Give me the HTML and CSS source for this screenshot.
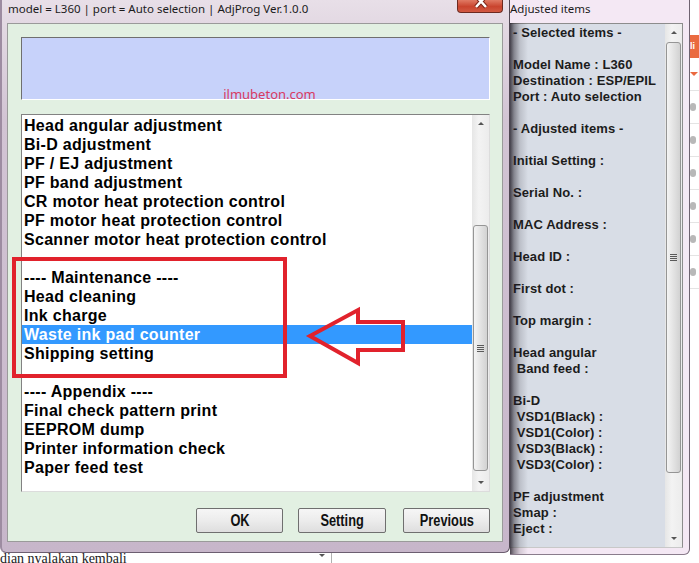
FILE: index.html
```html
<!DOCTYPE html>
<html>
<head>
	<meta charset="utf-8">
	<link rel="stylesheet" href="styles.css">
</head>
<body>
<div class="screen">
	<div class="left-col">
		<div class="win main">
			<div class="titlebar">
				<span class="title">model = L360 | port = Auto selection | AdjProg Ver.1.0.0</span>
				<span class="close">
					<svg width="46" height="13" viewBox="0 0 46 13">
						<path d="M19 -4 L29 7 M29 -4 L19 7" stroke="#7a2418" stroke-width="4.5" fill="none"/>
						<path d="M19 -4 L29 7 M29 -4 L19 7" stroke="#ffffff" stroke-width="2.5" fill="none"/>
					</svg>
				</span>
			</div>
			<div class="client">
				<div class="banner"><span class="mark">ilmubeton.com</span></div>
				<div class="listbox">
					<ul class="items">
						<li>Head angular adjustment</li>
						<li>Bi-D adjustment</li>
						<li>PF / EJ adjustment</li>
						<li>PF band adjustment</li>
						<li>CR motor heat protection control</li>
						<li>PF motor heat protection control</li>
						<li>Scanner motor heat protection control</li>
						<li>&nbsp;</li>
						<li>---- Maintenance ----</li>
						<li>Head cleaning</li>
						<li>Ink charge</li>
						<li class="selected">Waste ink pad counter</li>
						<li>Shipping setting</li>
						<li>&nbsp;</li>
						<li>---- Appendix ----</li>
						<li>Final check pattern print</li>
						<li>EEPROM dump</li>
						<li>Printer information check</li>
						<li>Paper feed test</li>
					</ul>
					<div class="scroll">
						<div class="sb-btn"><span class="up"></span></div>
						<div class="sb-gap"></div>
						<div class="thumb"><span class="grip"></span></div>
						<div class="sb-rest"></div>
						<div class="sb-btn"><span class="down"></span></div>
					</div>
				</div>
				<div class="buttons">
					<button class="btn"><span class="label">OK</span></button>
					<button class="btn wide"><span class="label">Setting</span></button>
					<button class="btn"><span class="label">Previous</span></button>
				</div>

				<!-- annotation drawn over the dialog -->
				<div class="callout"></div>
				<svg class="arrow" width="110" height="64" viewBox="0 0 110 64">
					<polygon points="7,31 55,5 55,17 100,17 100,45 55,45 55,58" fill="none" stroke="#e1222c" stroke-width="4" stroke-linejoin="miter"/>
				</svg>
			</div>
		</div>
		<div class="below">
			<span class="below-text">dian nyalakan kembali</span>
			<span class="below-arrow"></span>
			<span class="below-line"></span>
		</div>
	</div>

	<div class="win side">
		<div class="side-title">Adjusted items</div>
		<div class="side-list">
			<div class="report">- Selected items -

Model Name : L360
Destination : ESP/EPIL
Port : Auto selection

- Adjusted items -

Initial Setting :

Serial No. :

MAC Address :

Head ID :

First dot :

Top margin :

Head angular
 Band feed :

Bi-D
 VSD1(Black) :
 VSD1(Color) :
 VSD3(Black) :
 VSD3(Color) :

PF adjustment
Smap :
Eject :</div>
			<div class="scroll">
				<div class="sb-btn"><span class="up"></span></div>
				<div class="thumb long"><span class="grip"></span></div>
				<div class="sb-rest"></div>
				<div class="sb-btn"><span class="down"></span></div>
			</div>
		</div>
	</div>

	<div class="edge">
		<div class="edge-tab">li</div>
		<div class="edge-row"><span class="edge-caret"></span></div>
		<div class="edge-row"><span class="edge-dot"></span></div>
		<div class="edge-row"><span class="edge-dot"></span></div>
		<div class="edge-row"><span class="edge-dot"></span></div>
		<div class="edge-row"><span class="edge-dot"></span></div>
		<div class="edge-row"><span class="edge-dot"></span></div>
		<div class="edge-row"><span class="edge-dot"></span></div>
	</div>
</div>
</body>
</html>
```

FILE: styles.css
```css
html, body {
	margin: 0;
	padding: 0;
	background: #ffffff;
}

.screen {
	width: 699px;
	height: 563px;
	overflow: hidden;
	display: flex;
	flex-direction: row;
	font-family: "Liberation Sans", Arial, sans-serif;
}

/* ---------- main dialog ---------- */

.left-col {
	width: 510px;
	display: flex;
	flex-direction: column;
}

.main {
	height: 553px;
	box-sizing: border-box;
	display: flex;
	flex-direction: column;
	background: linear-gradient(to bottom, #e8dfe8 0, #e3d9e3 23px, #d2c4d4 120px, #c7b6ca 100%);
	border-left: 2px solid #9d8ca1;
	border-right: 1px solid #4f4652;
	border-bottom: 1px solid #6c5e70;
	border-radius: 0 0 6px 6px;
}

.titlebar {
	height: 23px;
	display: flex;
	align-items: flex-start;
	padding-left: 6px;
}

.title {
	font-family: "Noto Sans", "Open Sans", sans-serif;
	font-size: 11.5px;
	line-height: 18px;
	color: #1b1b1b;
	white-space: nowrap;
}

.close {
	margin-left: auto;
	margin-right: 6px;
	width: 46px;
	height: 13px;
	box-sizing: border-box;
	border: 1px solid #6d2a20;
	border-top: 0;
	border-radius: 0 0 4px 4px;
	background: linear-gradient(to bottom, #e07a64 0, #c9442e 55%, #d25a43 100%);
	overflow: hidden;
}

.close svg {
	display: block;
	margin-left: -1px;
}

.client {
	position: relative;
	height: 519px;
	box-sizing: border-box;
	margin: 0 6px 0 5px;
	border: 1px solid #9a9a9a;
	background: #e2f0e2;
	padding: 13px 12px 8px 13px;
	display: flex;
	flex-direction: column;
}

.banner {
	height: 63px;
	box-sizing: border-box;
	background: #c7d2fa;
	border: 1px solid #ffffff;
	border-top-color: #6f6f6f;
	border-left-color: #6f6f6f;
	display: flex;
	align-items: flex-end;
	justify-content: center;
	padding-left: 28px;
}

.mark {
	font-family: "Noto Sans", "Open Sans", sans-serif;
	font-size: 13px;
	line-height: 14px;
	color: #d73a62;
	margin-bottom: -2px;
}

.listbox {
	margin-top: 14px;
	height: 378px;
	box-sizing: border-box;
	display: flex;
	background: #ffffff;
	border: 1px solid #dcdcdc;
	border-top-color: #828282;
	border-left-color: #828282;
}

.items {
	flex: 1;
	list-style: none;
	margin: 0;
	padding: 1px 0 0 0;
	font-weight: bold;
	font-size: 16px;
	letter-spacing: 0.3px;
	line-height: 19px;
	color: #000000;
}

.items li {
	padding-left: 2px;
	white-space: nowrap;
}

.items li.selected {
	background: #3399ff;
	color: #ffffff;
}

/* ---------- scrollbars ---------- */

.scroll {
	width: 17px;
	display: flex;
	flex-direction: column;
	background: linear-gradient(to right, #e6e6e6, #f3f3f3 40%, #ececec);
}

.sb-btn {
	height: 17px;
	display: flex;
	align-items: center;
	justify-content: center;
}

.up {
	width: 0;
	height: 0;
	border-left: 3px solid transparent;
	border-right: 3px solid transparent;
	border-bottom: 3px solid #555555;
}

.down {
	width: 0;
	height: 0;
	border-left: 3px solid transparent;
	border-right: 3px solid transparent;
	border-top: 3px solid #555555;
}

.sb-gap {
	height: 93px;
}

.thumb {
	height: 246px;
	box-sizing: border-box;
	margin: 0 1px;
	border: 1px solid #959595;
	border-radius: 3px;
	background: linear-gradient(to right, #f4f4f4, #e3e3e3 50%, #d2d2d2);
	display: flex;
	align-items: center;
	justify-content: center;
}

.thumb.long {
	height: 431px;
	margin-top: 1px;
}

.grip {
	width: 7px;
	height: 7px;
	background: repeating-linear-gradient(to bottom, #5a5a5a 0, #5a5a5a 1px, transparent 1px, transparent 2px);
}

.sb-rest {
	flex: 1;
}

/* ---------- buttons ---------- */

.buttons {
	margin-top: 16px;
	display: flex;
	justify-content: flex-end;
	gap: 15px;
}

.btn {
	width: 87px;
	height: 25px;
	box-sizing: border-box;
	padding: 0;
	border: 1px solid #6f6f6f;
	border-radius: 2px;
	background: linear-gradient(to bottom, #f6f6f6, #ececec 50%, #dedede);
	font-family: "Liberation Sans", Arial, sans-serif;
	font-weight: bold;
	font-size: 16px;
	color: #111111;
}

.btn .label {
	display: inline-block;
	transform: scaleX(0.8);
}

.btn.wide {
	width: 88px;
	margin-right: 2px;
}

/* ---------- annotation ---------- */

.callout {
	position: absolute;
	left: 4px;
	top: 233px;
	width: 267px;
	height: 113px;
	border: 4px solid #e1222c;
}

.arrow {
	position: absolute;
	left: 295px;
	top: 281px;
}

/* ---------- strip under the dialog ---------- */

.below {
	height: 10px;
	overflow: hidden;
	display: flex;
	align-items: flex-start;
}

.below-text {
	width: 318px;
	font-family: "Liberation Serif", serif;
	font-size: 14px;
	line-height: 12px;
	color: #222222;
	white-space: nowrap;
}

.below-arrow {
	width: 0;
	height: 0;
	margin: 1px 6px 0 1px;
	border-left: 3px solid transparent;
	border-right: 3px solid transparent;
	border-top: 3px solid #555555;
}

.below-line {
	flex: 1;
	height: 10px;
	border-left: 1px solid #b0b0b0;
}

/* ---------- adjusted items window ---------- */

.side {
	position: relative;
	width: 180px;
	height: 555px;
	box-sizing: border-box;
	display: flex;
	flex-direction: column;
	background: #f4e8f4;
	border-right: 1px solid #6e6270;
	border-bottom: 1px solid #8a7c8c;
	border-radius: 0 0 6px 0;
}

.side::before {
	content: "";
	position: absolute;
	left: 0;
	top: 23px;
	bottom: 0;
	width: 20px;
	background: linear-gradient(to right, rgba(30, 25, 35, 0.8) 0, rgba(30, 25, 35, 0.45) 4px, rgba(30, 25, 35, 0.15) 10px, rgba(30, 25, 35, 0) 18px);
}

.side-title {
	height: 23px;
	font-family: "Noto Sans", "Open Sans", sans-serif;
	font-size: 11.5px;
	line-height: 17px;
	color: #1b1b1b;
	white-space: nowrap;
}

.side-list {
	height: 525px;
	margin-right: 6px;
	box-sizing: border-box;
	display: flex;
	background: #d8dde6;
	border: 1px solid #8c8c8c;
	border-left: 0;
	border-bottom-color: #c8c8c8;
}

.report {
	flex: 1;
	padding: 1px 0 0 3px;
	white-space: pre;
	font-weight: bold;
	font-size: 13px;
	letter-spacing: 0.1px;
	line-height: 16px;
	color: #1c1c1c;
	overflow: hidden;
}

/* ---------- page behind, right edge ---------- */

.edge {
	flex: 1;
	background: #ffffff;
	display: flex;
	flex-direction: column;
	padding-top: 35px;
}

.edge-tab {
	height: 23px;
	background: #ea6a40;
	color: #ffffff;
	font-size: 9px;
	font-weight: bold;
	line-height: 23px;
	overflow: hidden;
}

.edge-row {
	height: 32px;
	border-bottom: 1px solid #e4e4e4;
	display: flex;
	align-items: center;
}

.edge-caret {
	width: 0;
	height: 0;
	border-left: 4px solid transparent;
	border-right: 4px solid transparent;
	border-top: 4px solid #ea6a40;
}

.edge-dot {
	width: 6px;
	height: 8px;
	border-radius: 3px;
	background: #b8b8b8;
}
```
